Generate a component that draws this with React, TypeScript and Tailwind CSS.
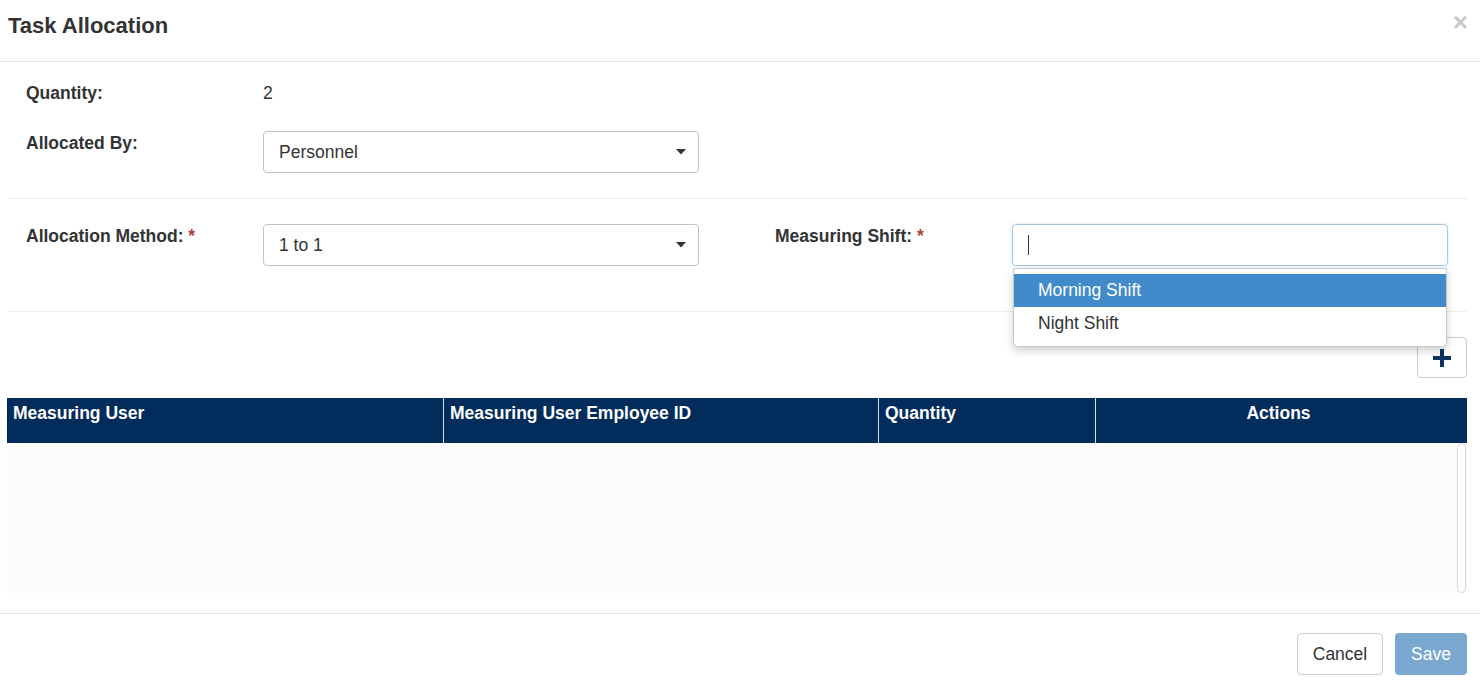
function Caret() {
  return (
    <svg width="10" height="6" viewBox="0 0 10 6" className="shrink-0">
      <path d="M0 0 L10 0 L5 5.5 Z" fill="#333" />
    </svg>
  )
}

function SelectBox({ value }: { value: string }) {
  return (
    <div className="w-[436px] h-[42px] border border-[#c4c4c4] rounded-[4px] flex items-center justify-between pl-[15px] pr-[12px] bg-white">
      <span>{value}</span>
      <Caret />
    </div>
  )
}

export default function App() {
  const cols = [
    { label: 'Measuring User', w: 'w-[436px]', center: false },
    { label: 'Measuring User Employee ID', w: 'w-[435px]', center: false },
    { label: 'Quantity', w: 'w-[217px]', center: false },
    { label: 'Actions', w: 'flex-1 pr-[12px]', center: true },
  ]

  return (
    <div className="w-[1480px] h-[687px] bg-white text-[#333] text-[17.5px] leading-[25px] font-['Liberation_Sans',Arial,sans-serif] overflow-hidden">
      {/* header */}
      <div className="h-[62px] border-b border-[#e5e5e5] flex items-start justify-between pl-[8px] pr-[12px] pt-[13px]">
        <h1 className="text-[22px] font-bold leading-[26px] text-[#333]">Task Allocation</h1>
        <span className="text-[26px] font-bold leading-none text-[#c8c8c8] -mt-[4px]">×</span>
      </div>

      {/* body */}
      <div className="px-[8px] pt-[19px]">
        <div className="pl-[18px]">
          <div className="flex">
            <div className="w-[237px] font-bold">Quantity:</div>
            <div>2</div>
          </div>
          <div className="flex mt-[25px] items-start">
            <div className="w-[237px] font-bold">Allocated By:</div>
            <SelectBox value="Personnel" />
          </div>
        </div>

        <div className="h-px bg-[#eee] mt-[25px] w-[1459px]" />

        <div className="pl-[18px] mt-[25px] flex items-start">
          <div className="w-[237px] font-bold">
            Allocation Method: <span className="text-[#a94442]">*</span>
          </div>
          <SelectBox value="1 to 1" />
          <div className="w-[237px] ml-[76px] font-bold">
            Measuring Shift: <span className="text-[#a94442]">*</span>
          </div>
          <div className="relative">
            <div className="w-[436px] h-[42px] border border-[#a8c9e8] rounded-[4px] flex items-center pl-[15px] shadow-[0_0_3px_rgba(102,175,233,0.35)]">
              <span className="w-px h-[20px] bg-[#333]" />
            </div>
            <div className="absolute left-[1px] top-[44px] w-[434px] bg-white border border-[#c8c8c8] rounded-b-[4px] shadow-[0_4px_8px_rgba(0,0,0,0.18)] pt-[5px] pb-[6px] z-10">
              <div className="h-[33px] bg-[#428bca] text-white flex items-center pl-[24px]">Morning Shift</div>
              <div className="h-[33px] flex items-center pl-[24px]">Night Shift</div>
            </div>
          </div>
        </div>

        <div className="h-px bg-[#eee] mt-[45px] w-[1459px]" />

        <div className="flex justify-end mt-[25px] w-[1459px]">
          <button className="w-[50px] h-[41px] border border-[#ccc] rounded-[4px] bg-white flex items-center justify-center">
            <svg width="18" height="18" viewBox="0 0 18 18">
              <rect x="7" y="0" width="4" height="18" fill="#0b3463" />
              <rect x="0" y="7" width="18" height="4" fill="#0b3463" />
            </svg>
          </button>
        </div>

        {/* table */}
        <div className="mt-[20px] w-[1460px] -ml-px">
          <div className="flex h-[45px] bg-[#022c5c] text-white font-bold">
            {cols.map((c, i) => (
              <div
                key={c.label}
                className={`${c.w} pl-[6px] pt-[3px] ${i > 0 ? 'border-l border-[#d8dde5]' : ''} ${c.center ? 'text-center' : ''}`}
              >
                {c.label}
              </div>
            ))}
          </div>
          <div className="h-[150px] bg-[#fcfcfc] flex justify-end pr-[1px]">
            <div className="w-[9px] h-full border border-[#d6d6d6] rounded-[5px] bg-white" />
          </div>
        </div>
      </div>

      {/* footer */}
      <div className="mt-[20px] border-t border-[#e5e5e5] flex justify-end gap-[12px] pr-[13px] pt-[19px]">
        <button className="w-[86px] h-[42px] border border-[#ccc] rounded-[4px] bg-white text-[#333]">Cancel</button>
        <button className="w-[72px] h-[42px] rounded-[4px] bg-[#7aa8d0] text-white">Save</button>
      </div>
    </div>
  )
}
